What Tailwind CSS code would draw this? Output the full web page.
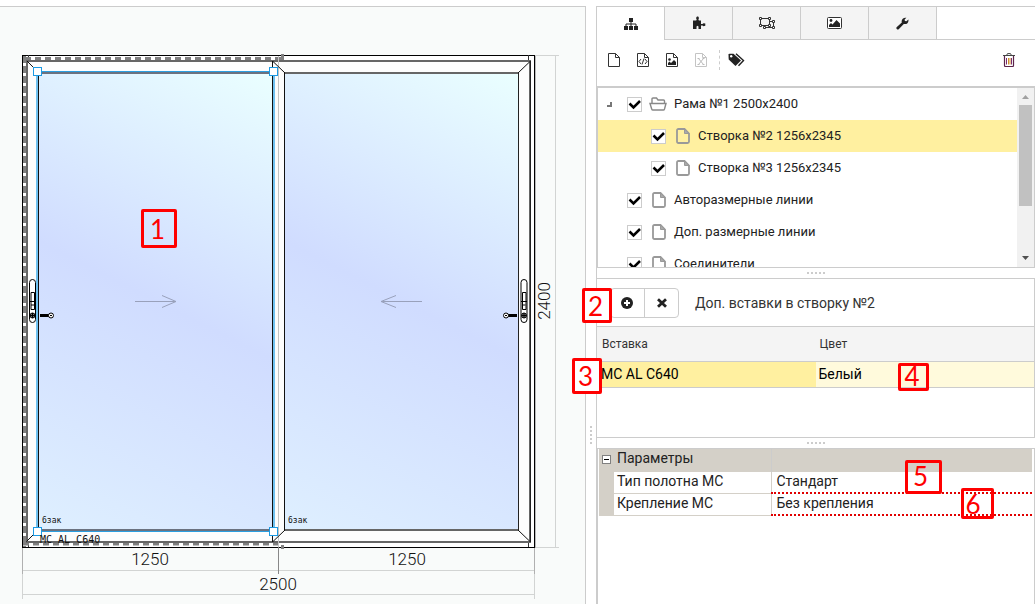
<!DOCTYPE html>
<html lang="ru">
<head>
    <meta charset="UTF-8">
    <meta name="viewport" content="width=device-width, initial-scale=1.0">
    <title>Рама №1 2500x2400</title>
    <script src="https://cdn.jsdelivr.net/npm/@tailwindcss/browser@4"></script>
</head>
<body class="bg-white font-[Roboto,sans-serif] text-sm text-[#333]">

    <!-- Shared icons -->
    <svg class="hidden">
        <symbol id="check" viewBox="0 0 15 15">
            <path d="M2.500 6.500L6.500 10.500L13 4" fill="none" stroke="#000" stroke-width="2.500"/>
        </symbol>
        <symbol id="doc" viewBox="0 0 14 16">
            <path d="M1 2.500Q1 1 2.500 1H8.500L13 5.500V13.500Q13 15 11.500 15H2.500Q1 15 1 13.500Z" fill="none" stroke="#999" stroke-width="1.800"/>
            <path d="M8.500 1V5.500H13Z" fill="#aaa" stroke="#999"/>
        </symbol>
        <symbol id="file" viewBox="0 0 14 16">
            <path d="M1.500 1.500H8.500L12.500 5.500V14.500H1.500Z M8.500 1.500V5.500H12.500" fill="none" stroke="currentColor"/>
        </symbol>
    </svg>

    <main class="flex h-screen overflow-hidden pt-[6px]">

        <!-- Drawing -->
        <section class="relative min-w-0 flex-1 overflow-hidden border-t border-r border-[#ccc] bg-[#f9fbfa]">
            <svg class="block" width="585" height="597" viewBox="0 7 585 597" fill="none">
                <defs>
                    <linearGradient id="glassLeft" gradientUnits="userSpaceOnUse" x1="272" y1="73" x2="42" y2="529">
                        <stop offset="0" stop-color="#eaffff"/>
                        <stop offset=".5" stop-color="#d0dcff"/>
                        <stop offset="1" stop-color="#deefff"/>
                    </linearGradient>
                    <linearGradient id="glassRight" gradientUnits="userSpaceOnUse" x1="518" y1="73" x2="288" y2="529">
                        <stop offset="0" stop-color="#eaffff"/>
                        <stop offset=".5" stop-color="#d0dcff"/>
                        <stop offset="1" stop-color="#deefff"/>
                    </linearGradient>
                    <g id="lever" stroke="#000">
                        <rect x="29.500" y="279.500" width="6" height="43" rx="3" fill="#fff"/>
                        <path d="M31 292.500h3.500v17h-3.500zM29.500 301.500h6M31 305h3"/>
                        <circle cx="32.500" cy="315.500" r="2.500" fill="#777"/>
                        <path d="M30 315.500h5M32.500 313v5" />
                    </g>
                </defs>

                <!-- Dimension lines -->
                <g stroke="#d2d4d3">
                    <path d="M22.500 548V599M534.500 548V599M22 570.500H535M22 594.500H535M535 55.500H559M555.500 56V547M535 547.500H559"/>
                    <path d="M22.500 548V574M534.500 548V574" stroke="#b0b0b0"/>
                </g>

                <!-- Frame -->
                <rect x="22.500" y="55.500" width="512" height="492" fill="#fff" stroke="#000"/>
                <path d="M535.500 56V548" stroke="#bbb"/>
                <path d="M28.500 55V61M528.500 55V61M28.500 542V547M528.500 542V547" stroke="#333"/>
                <path d="M24.500 56V547" stroke="#808080" stroke-width="3" stroke-dasharray="7 3"/>
                <path d="M25 58.500H282" stroke="#808080" stroke-width="3" stroke-dasharray="6 4"/>
                <path d="M23 544H282" stroke="#808080" stroke-width="3" stroke-dasharray="6 4"/>
                <path d="M282.500 54V61M282.500 545V549" stroke="#808080" stroke-width="3"/>
                <rect x="27" y="61" width="503" height="481" fill="#fdfdfd" stroke="#666" stroke-width="2"/>
                <path d="M530.500 61V542" stroke="#222"/>
                <path d="M278.500 56V547" stroke="#c4c4c4"/>
                <path d="M278.500 547V574" stroke="#888"/>

                <!-- Sashes -->
                <rect x="38" y="73" width="235" height="457" fill="url(#glassLeft)"/>
                <rect x="284" y="73" width="235" height="457" fill="url(#glassRight)"/>
                <path d="M38 73H273M38 530H273" stroke="#6b7280" stroke-width="2"/>
                <path d="M284 73H519M284 530H519" stroke="#666" stroke-width="2"/>
                <path d="M38.500 72V531M272.500 61V542M284.500 73V530" stroke="#111"/>
                <path d="M518.500 73V530" stroke="#222"/>
                <path d="M27 61L38 72M273 61.500L285 73M530 61.500L518 73M26.500 541.500L38 530M273 541.500L285 530M530 541.500L518 530" stroke="#111"/>

                <!-- Selection -->
                <path d="M37 72V531M274 72V531" stroke="#6fc1f0" stroke-width="2"/>
                <path d="M37 71.500H275M37 531.500H275" stroke="#2b9ee0"/>
                <g fill="#fff" stroke="#1c9ae4">
                    <rect x="33.500" y="67.500" width="8" height="8"/>
                    <rect x="269.500" y="67.500" width="8" height="8"/>
                    <rect x="33.500" y="527.500" width="8" height="8"/>
                    <rect x="269.500" y="527.500" width="8" height="8"/>
                </g>

                <!-- Opening arrows -->
                <path d="M135 301.500H176M162 295.500L176 301.500L162 307.500M422 301.500H381M396 295.500L381 301.500L396 307.500" stroke="#99a1bb"/>

                <!-- Handles and keys -->
                <use href="#lever"/>
                <use href="#lever" x="491.500"/>
                <path d="M40 315.500H49M507 315.500H517" stroke="#000" stroke-width="3"/>
                <circle cx="51" cy="315.500" r="2.500" fill="#fff" stroke="#000"/>
                <circle cx="506" cy="315.500" r="2.500" fill="#fff" stroke="#000"/>
                <path d="M50 315.500h2M505 315.500h2" stroke="#000"/>

                <g fill="#111" font-family="Roboto, sans-serif" font-weight="300" font-size="17" text-anchor="middle">
                    <text x="150" y="565">1250</text>
                    <text x="407" y="565">1250</text>
                    <text x="278" y="590">2500</text>
                    <text transform="translate(550 301) rotate(-90)">2400</text>
                </g>
                <g fill="#111" font-family="'DejaVu Sans Mono', monospace">
                    <text x="42" y="523" font-size="8">6зак</text>
                    <text x="288" y="523" font-size="8">6зак</text>
                    <text x="40" y="543" font-size="10">MC AL C640</text>
                </g>
            </svg>
            <div class="absolute top-[202px] left-[141px] flex h-[39px] w-[36px] items-center justify-center rounded-xs border-3 border-[#f00] pt-[3px] pr-[3px] font-[Lato,sans-serif] text-[26px] text-[#f00]">1</div>
        </section>

        <!-- Vertical resizer -->
        <div class="flex w-[10px] shrink-0 items-center justify-center pt-[259px]">
            <div class="flex flex-col gap-[2px]">
                <i class="size-[2px] bg-[#ccc]"></i><i class="size-[2px] bg-[#ccc]"></i><i class="size-[2px] bg-[#ccc]"></i><i class="size-[2px] bg-[#ccc]"></i><i class="size-[2px] bg-[#ccc]"></i>
            </div>
        </div>

        <aside class="flex w-[439px] shrink-0 flex-col border-l border-[#ccc]">

            <!-- Tabs -->
            <nav class="flex h-[34px] shrink-0 border-t border-[#ccc]">
                <button type="button" aria-label="Структура" class="flex w-[68px] items-center justify-center border-r border-[#ccc]">
                    <svg width="14" height="14" viewBox="0 0 14 14" fill="#222"><path d="M5 1h4v4H5zM0 9h4v4H0zM5 9h4v4H5zM10 9h4v4h-4z"/><path d="M7 4v5M2 9V7h10v2" fill="none" stroke="#222"/></svg>
                </button>
                <button type="button" aria-label="Вставки" class="flex w-[68px] items-center justify-center border-r border-b border-[#ccc] bg-[#f4f4f4]">
                    <svg width="14" height="14" viewBox="0 0 14 14" fill="#222"><path d="M1 4.500h3.200l.5-1-.7-1.500L5 .5h1.200l.8 1.500-.6 1.500.5 1H9V8h1.500l1-.8 1.800.3v2.300l-1.800.4-1-.7H9V13H6.500v-2.500l-1-.7-1 .7V13H1z"/></svg>
                </button>
                <button type="button" aria-label="Контур" class="flex w-[68px] items-center justify-center border-r border-b border-[#ccc] bg-[#f4f4f4]">
                    <svg width="18" height="14" viewBox="0 0 18 14" fill="none" stroke="#333"><path d="M2.500 2.500h9v7h-9zM12 5.500h3.500v6h-9V10"/><path d="M1.500 1.500h2v2h-2zM10.500 1.500h2v2h-2zM1.500 8.500h2v2h-2zM10.500 8.500h2v2h-2zM14.500 4.500h2v2h-2zM14.500 10.500h2v2h-2zM5.500 10.500h2v2h-2z" fill="#fff"/></svg>
                </button>
                <button type="button" aria-label="Изображение" class="flex w-[68px] items-center justify-center border-r border-b border-[#ccc] bg-[#f4f4f4]">
                    <svg width="15" height="12" viewBox="0 0 15 12"><rect x=".5" y=".5" width="14" height="11" rx="1" fill="#fff" stroke="#333"/><circle cx="4" cy="3.500" r="1.400" fill="#222"/><path d="M2 10V8l2-2 1.500 1.500L9.500 3 13 6.500V10z" fill="#222"/></svg>
                </button>
                <button type="button" aria-label="Настройки" class="flex w-[68px] items-center justify-center border-r border-b border-[#ccc] bg-[#f4f4f4]">
                    <svg width="13" height="13" viewBox="0 0 13 13" fill="#222"><path d="M.6 10.200L5.800 5.400C5 2.600 7.300.3 10.400.8L8.600 2.600l.3 1.400 1.500.3L12.400 2.600c.5 3-1.700 5-4.600 4.400L2.700 12.300C1.400 13.200-.4 11.500.6 10.200z"/></svg>
                </button>
                <div class="flex-1 border-b border-[#ccc]"></div>
            </nav>

            <!-- Toolbar -->
            <div class="flex h-[46px] shrink-0 items-center pr-5 pb-[7px] pl-[10px] text-[#333]">
                <button type="button" aria-label="Новый" class="w-[29px]"><svg width="14" height="16"><use href="#file"/></svg></button>
                <button type="button" aria-label="Код" class="w-[29px]">
                    <svg width="14" height="16" fill="none" stroke="#333"><use href="#file"/><path d="M5 7L3 9.500 5 12M9 7l2 2.500L9 12M8 6.500l-2 6"/></svg>
                </button>
                <button type="button" aria-label="Картинка" class="w-[29px]">
                    <svg width="14" height="16" fill="#222"><use href="#file"/><circle cx="4.500" cy="7.500" r="1.300"/><path d="M3 13v-2l1.500-1.500L6 11l3-3 2 2v3z"/></svg>
                </button>
                <button type="button" disabled aria-label="Таблица" class="w-[25px] text-[#c4c4c4]">
                    <svg width="14" height="16" fill="none" stroke="#bbb"><use href="#file"/><path d="M4.500 6.500l5 6M9.500 6.500l-5 6M3.500 6.500h2M8.500 6.500h2M3.500 12.500h2M8.500 12.500h2"/></svg>
                </button>
                <span class="mr-2 h-5 border-l border-dashed border-[#ccc]"></span>
                <button type="button" aria-label="Метки">
                    <svg width="17" height="14" viewBox="0 0 17 14"><path d="M.5 1.500Q.5.700 1.500.700H5.500L13 7.500 7.500 13 .7 6.500z" fill="#222"/><path d="M8 .8L15.500 7.500 10.500 12.800" fill="none" stroke="#222" stroke-width="1.400"/><circle cx="3.200" cy="3.200" r="1.200" fill="#fff"/></svg>
                </button>
                <button type="button" aria-label="Удалить" class="ml-auto">
                    <svg width="12" height="14" viewBox="0 0 12 14" fill="none"><path d="M1.500 3v9.500q0 1 1 1h7q1 0 1-1V3" stroke="#5b2348" stroke-width="1.200"/><path d="M0 2.500h12M3.500 2.500L4.500.6h3l1 1.900" stroke="#444"/><path d="M3.500 5v6.500M8.500 5v6.500" stroke="#7a2d70"/><path d="M5.500 5v6.500M7 5v6.500" stroke="#d0902c"/></svg>
                </button>
            </div>

            <!-- Structure tree -->
            <section class="flex h-[182px] shrink-0 border border-t-2 border-[#ccc]">
                <ul class="h-[179px] flex-1 overflow-hidden text-[13px] text-[#222]">
                    <li class="flex h-8 items-center pl-[9px]">
                        <svg class="mr-[15px]" width="5" height="5"><path d="M4 0v4H0" fill="none" stroke="#777" stroke-width="2"/></svg>
                        <label class="flex items-center"><span class="grid"><input type="checkbox" checked class="col-start-1 row-start-1 size-[15px] appearance-none border border-[#ccc] bg-white"><svg class="pointer-events-none col-start-1 row-start-1" width="15" height="15"><use href="#check"/></svg></span>
                        <svg class="mr-[7px] ml-[7px]" width="18" height="14" viewBox="0 0 18 14" fill="none" stroke="#888" stroke-width="1.400"><path d="M3 6.500V2q0-1 1-1h3.500l1.500 2h5.500q1 0 1 1v2.500M1 6.500h16l-1.500 5.500q-.3 1-1.200 1H4q-1 0-1.300-1z"/></svg>Рама №1 2500x2400</label>
                    </li>
                    <li class="flex h-8 items-center bg-[#fff0a0] pl-[53px]">
                        <label class="flex items-center"><span class="grid"><input type="checkbox" checked class="col-start-1 row-start-1 size-[15px] appearance-none border border-[#ccc] bg-white"><svg class="pointer-events-none col-start-1 row-start-1" width="15" height="15"><use href="#check"/></svg></span>
                        <svg class="mr-[8px] ml-[10px]" width="14" height="16"><use href="#doc"/></svg>Створка №2 1256x2345</label>
                    </li>
                    <li class="flex h-8 items-center pl-[53px]">
                        <label class="flex items-center"><span class="grid"><input type="checkbox" checked class="col-start-1 row-start-1 size-[15px] appearance-none border border-[#ccc] bg-white"><svg class="pointer-events-none col-start-1 row-start-1" width="15" height="15"><use href="#check"/></svg></span>
                        <svg class="mr-[8px] ml-[10px]" width="14" height="16"><use href="#doc"/></svg>Створка №3 1256x2345</label>
                    </li>
                    <li class="flex h-8 items-center pl-[29px]">
                        <label class="flex items-center"><span class="grid"><input type="checkbox" checked class="col-start-1 row-start-1 size-[15px] appearance-none border border-[#ccc] bg-white"><svg class="pointer-events-none col-start-1 row-start-1" width="15" height="15"><use href="#check"/></svg></span>
                        <svg class="mr-[8px] ml-[10px]" width="14" height="16"><use href="#doc"/></svg>Авторазмерные линии</label>
                    </li>
                    <li class="flex h-8 items-center pl-[29px]">
                        <label class="flex items-center"><span class="grid"><input type="checkbox" checked class="col-start-1 row-start-1 size-[15px] appearance-none border border-[#ccc] bg-white"><svg class="pointer-events-none col-start-1 row-start-1" width="15" height="15"><use href="#check"/></svg></span>
                        <svg class="mr-[8px] ml-[10px]" width="14" height="16"><use href="#doc"/></svg>Доп. размерные линии</label>
                    </li>
                    <li class="flex h-8 items-center pl-[29px]">
                        <label class="flex items-center"><span class="grid"><input type="checkbox" checked class="col-start-1 row-start-1 size-[15px] appearance-none border border-[#ccc] bg-white"><svg class="pointer-events-none col-start-1 row-start-1" width="15" height="15"><use href="#check"/></svg></span>
                        <svg class="mr-[8px] ml-[10px]" width="14" height="16"><use href="#doc"/></svg>Соединители</label>
                    </li>
                </ul>
                <div class="flex w-[17px] flex-col items-center bg-[#f1f1f1]">
                    <svg width="17" height="17"><path d="M5 11h7L8.500 7z" fill="#a0a0a0"/></svg>
                    <div class="h-[101px] w-[13px] bg-[#c1c1c1]"></div>
                    <svg class="mt-auto" width="17" height="17"><path d="M5 6h7L8.500 10z" fill="#505050"/></svg>
                </div>
            </section>

            <div class="flex h-[10px] shrink-0 items-center justify-center gap-[2px]">
                <i class="size-[2px] bg-[#ccc]"></i><i class="size-[2px] bg-[#ccc]"></i><i class="size-[2px] bg-[#ccc]"></i><i class="size-[2px] bg-[#ccc]"></i><i class="size-[2px] bg-[#ccc]"></i>
            </div>

            <!-- Inserts -->
            <section class="relative h-[160px] shrink-0 border border-l-0 border-[#ccc]">
                <div class="flex h-[47px] items-center">
                    <div class="ml-[13px] flex h-[30px] rounded-sm border border-[#ccc] text-[#222]">
                        <button type="button" aria-label="Добавить" class="flex w-[34px] items-center justify-center border-r border-[#ccc] pr-[2px]">
                            <svg width="12" height="12" viewBox="0 0 12 12"><circle cx="6" cy="6" r="6" fill="#222"/><path d="M6 3v6M3 6h6" stroke="#fff" stroke-width="2"/></svg>
                        </button>
                        <button type="button" aria-label="Удалить вставку" class="flex w-[33px] items-center justify-center">
                            <svg width="10" height="10" viewBox="0 0 10 10"><path d="M1 1.200l8 7.600M9 1.200L1 8.800" stroke="#222" stroke-width="2.800"/></svg>
                        </button>
                    </div>
                    <span class="ml-4">Доп. вставки в створку №2</span>
                </div>
                <table class="w-full table-fixed border-collapse text-left">
                    <thead>
                        <tr class="h-[35px] border-y border-[#ccc] bg-[#f4f4f4] text-xs">
                            <th class="pl-[5px] font-normal">Вставка</th>
                            <th class="pl-[4px] font-normal">Цвет</th>
                        </tr>
                    </thead>
                    <tbody>
                        <tr class="h-[26px] border-b border-[#ccc] text-black">
                            <td class="bg-[#fff0a0] pb-[2px] pl-[4px]">MC AL C640</td>
                            <td class="bg-[#fffadc] pb-[2px] pl-[3px]">Белый</td>
                        </tr>
                    </tbody>
                </table>
                <div class="absolute top-[9px] -left-[15px] flex h-[35px] w-[30px] items-center justify-center rounded-xs border-3 border-[#f00] bg-white pt-[2px] pr-[3px] font-[Lato,sans-serif] text-[26px] text-[#f00]">2</div>
                <div class="absolute top-[79px] -left-[25px] flex h-[36px] w-[30px] items-center justify-center rounded-xs border-3 border-[#f00] bg-white pt-[2px] pr-[3px] font-[Lato,sans-serif] text-[26px] text-[#f00]">3</div>
                <div class="absolute top-[84px] left-[301px] flex h-[28px] w-[31px] items-center justify-center rounded-xs border-3 border-[#f00] pr-[3px] font-[Lato,sans-serif] text-[26px] text-[#f00]">4</div>
            </section>

            <div class="flex h-[10px] shrink-0 items-center justify-center gap-[2px]">
                <i class="size-[2px] bg-[#ccc]"></i><i class="size-[2px] bg-[#ccc]"></i><i class="size-[2px] bg-[#ccc]"></i><i class="size-[2px] bg-[#ccc]"></i><i class="size-[2px] bg-[#ccc]"></i>
            </div>

            <!-- Parameters -->
            <section class="relative flex-1 border-t border-r border-l border-[#ccc] pr-[2px] pl-px">
                <table class="w-full table-fixed border-collapse text-left leading-[18px] text-[#222]">
                    <colgroup><col class="w-[15px]"><col class="w-[157px]"><col></colgroup>
                    <tbody>
                        <tr class="h-[22px] border-b border-[#d4d0c8] bg-[#d4d0c8]">
                            <td class="pl-[3px]">
                                <button type="button" aria-label="Свернуть" class="flex size-[9px] items-center justify-center border border-[#808080] bg-white"><i class="h-px w-[5px] bg-black"></i></button>
                            </td>
                            <th class="border-r border-[#ccc] pb-[3px] pl-[3px] font-normal">Параметры</th>
                            <td></td>
                        </tr>
                        <tr class="h-[22px]">
                            <td class="bg-[#d4d0c8]"></td>
                            <th class="border-r border-b border-[#d4d0c8] pb-[3px] pl-[3px] font-normal">Тип полотна МС</th>
                            <td class="border-b-2 border-dotted border-b-[#e00000] pb-[2px] pl-[5px]">Стандарт</td>
                        </tr>
                        <tr class="h-[22px]">
                            <td class="border-b border-[#d4d0c8] bg-[#d4d0c8]"></td>
                            <th class="border-r border-b border-[#d4d0c8] pb-[3px] pl-[3px] font-normal">Крепление МС</th>
                            <td class="border-b-2 border-dotted border-b-[#e00000] pb-[2px] pl-[5px]">Без крепления</td>
                        </tr>
                    </tbody>
                </table>
                <div class="absolute top-[11px] left-[307px] flex h-[34px] w-[37px] items-center justify-center rounded-xs border-3 border-[#f00] pr-[6px] font-[Lato,sans-serif] text-[26px] text-[#f00]">5</div>
                <div class="absolute top-[39px] left-[363px] flex h-[31px] w-[33px] items-center justify-center rounded-xs border-3 border-[#f00] pt-[3px] pr-[9px] font-[Lato,sans-serif] text-[26px] text-[#f00]">6</div>
            </section>
        </aside>
    </main>
</body>
</html>
